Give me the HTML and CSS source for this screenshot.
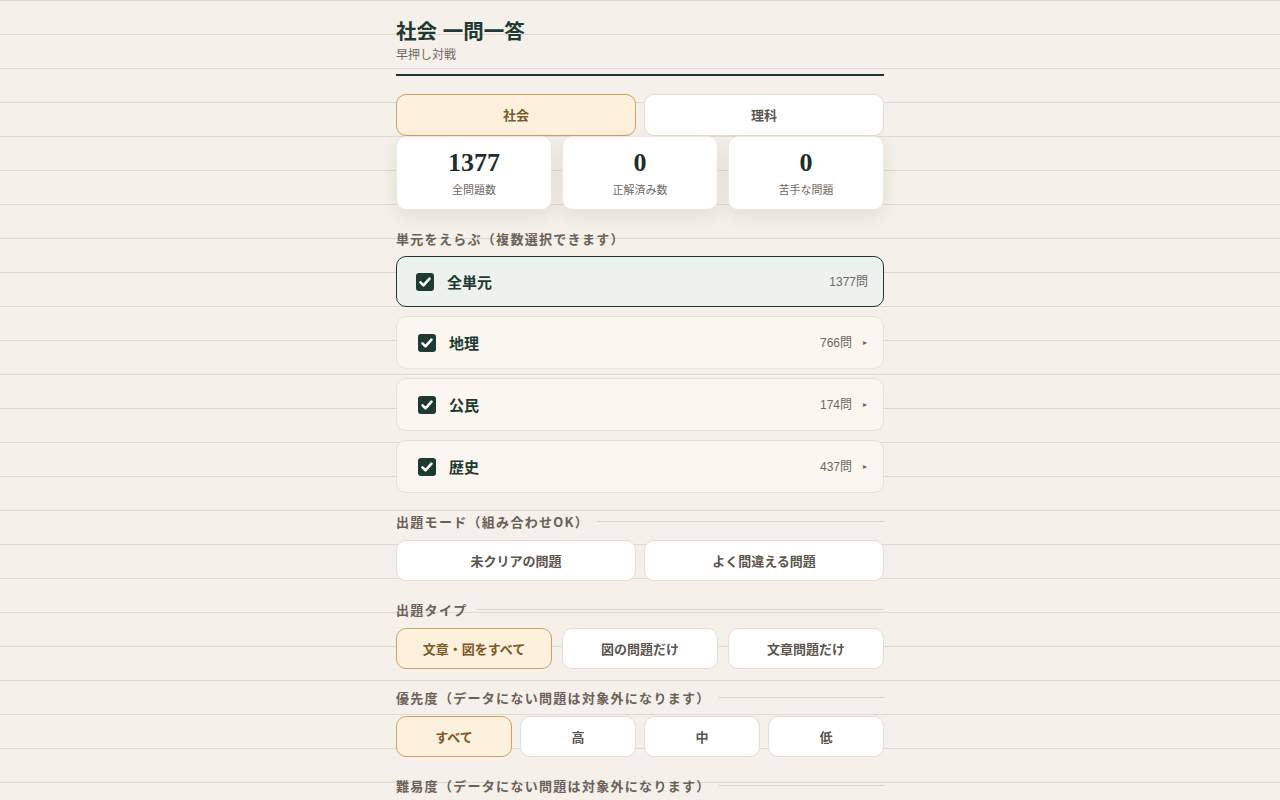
FILE: index.html
```html
<!DOCTYPE html>
<html lang="ja">
<head>
  <meta charset="UTF-8">
  <title>社会 一問一答</title>
  <link rel="stylesheet" href="styles.css">
</head>
<body>

  <div class="page">

    <header class="hero">
      <h1>社会 一問一答</h1>
      <p class="sub">早押し対戦</p>
    </header>

    <div class="tabs">
      <button class="btn active">社会</button>
      <button class="btn">理科</button>
    </div>

    <div class="stats">
      <div class="stat">
        <div class="num">1377</div>
        <div class="cap">全問題数</div>
      </div>
      <div class="stat">
        <div class="num">0</div>
        <div class="cap">正解済み数</div>
      </div>
      <div class="stat">
        <div class="num">0</div>
        <div class="cap">苦手な問題</div>
      </div>
    </div>

    <div class="section">
      <div class="label">単元をえらぶ（複数選択できます）</div>
      <div class="units">
        <div class="unit all">
          <span class="box"><svg viewBox="0 0 18 18"><path d="M4.5 9.3l3 3 6-6.6" /></svg></span>
          <span class="name">全単元</span>
          <span class="count">1377問</span>
        </div>
        <div class="unit">
          <span class="box"><svg viewBox="0 0 18 18"><path d="M4.5 9.3l3 3 6-6.6" /></svg></span>
          <span class="name">地理</span>
          <span class="count">766問</span>
          <span class="arrow">▸</span>
        </div>
        <div class="unit">
          <span class="box"><svg viewBox="0 0 18 18"><path d="M4.5 9.3l3 3 6-6.6" /></svg></span>
          <span class="name">公民</span>
          <span class="count">174問</span>
          <span class="arrow">▸</span>
        </div>
        <div class="unit">
          <span class="box"><svg viewBox="0 0 18 18"><path d="M4.5 9.3l3 3 6-6.6" /></svg></span>
          <span class="name">歴史</span>
          <span class="count">437問</span>
          <span class="arrow">▸</span>
        </div>
      </div>
    </div>

    <div class="section">
      <div class="label line">出題モード（組み合わせOK）</div>
      <div class="opts two">
        <button class="btn">未クリアの問題</button>
        <button class="btn">よく間違える問題</button>
      </div>
    </div>

    <div class="section">
      <div class="label line">出題タイプ</div>
      <div class="opts three">
        <button class="btn active">文章・図をすべて</button>
        <button class="btn">図の問題だけ</button>
        <button class="btn">文章問題だけ</button>
      </div>
    </div>

    <div class="section">
      <div class="label line">優先度（データにない問題は対象外になります）</div>
      <div class="opts four">
        <button class="btn active">すべて</button>
        <button class="btn">高</button>
        <button class="btn">中</button>
        <button class="btn">低</button>
      </div>
    </div>

    <div class="section">
      <div class="label line">難易度（データにない問題は対象外になります）</div>
    </div>

  </div>

</body>
</html>
```

FILE: styles.css
```css
body {
  margin: 0;
  font-family: "Liberation Sans", "Noto Sans CJK JP", sans-serif;
  color: #1e3a32;
  background-color: #f5f0e9;
  background-image: repeating-linear-gradient(to bottom, #e2d8ce 0, #e2d8ce 1px, transparent 1px, transparent 34px);
}

.page {
  width: 488px;
  margin: 0 auto;
  padding-bottom: 40px;
}

.hero {
  padding: 19px 0 11px;
  border-bottom: 2px solid #1e3a32;
  margin-bottom: 18px;
}

.hero h1 {
  margin: 0;
  font-size: 20.5px;
  line-height: 26px;
  font-weight: bold;
  color: #1e3a32;
}

.hero .sub {
  margin: 2px 0 0;
  font-size: 12px;
  line-height: 16px;
  color: #6f6860;
}

.btn {
  font-family: inherit;
  font-size: 13px;
  font-weight: bold;
  color: #5c554d;
  background: #ffffff;
  border: 1px solid #e6ddd2;
  border-radius: 10px;
  height: 41px;
  padding: 0;
  cursor: pointer;
}

.btn.active {
  background: #fdf0dc;
  border-color: #c9a264;
  color: #7a5a26;
}

.tabs {
  display: grid;
  grid-template-columns: 1fr 1fr;
  gap: 8px;
}

.tabs .btn {
  height: 42px;
  padding-bottom: 2px;
}

.stats {
  display: grid;
  grid-template-columns: repeat(3, 1fr);
  gap: 10px;
}

.stat {
  background: #ffffff;
  border: 1px solid #eee7de;
  border-radius: 10px;
  height: 74px;
  box-sizing: border-box;
  box-shadow: 0 6px 18px rgba(60, 45, 25, 0.09);
  text-align: center;
  padding-top: 11px;
}

.stat .num {
  font-family: "Liberation Serif", serif;
  font-size: 26px;
  font-weight: bold;
  line-height: 30px;
  color: #1c2f2a;
}

.stat .cap {
  font-size: 11px;
  line-height: 16px;
  margin-top: 4px;
  color: #6f6860;
}

.section {
  margin-top: 19px;
}

.label {
  display: flex;
  align-items: center;
  height: 18px;
  font-family: "Noto Sans CJK JP", sans-serif;
  font-size: 13px;
  font-weight: bold;
  letter-spacing: 1.3px;
  color: #6b6158;
  margin-bottom: 10px;
}

.label.line {
  gap: 8px;
}

.label.line::after {
  content: "";
  flex: 1;
  height: 1px;
  background: #ddd3c8;
}

.units {
  display: flex;
  flex-direction: column;
  gap: 9px;
  margin-top: -1px;
}

.unit {
  display: flex;
  align-items: center;
  height: 53px;
  box-sizing: border-box;
  padding: 0 16px 0 21px;
  background: #fbf6ef;
  border: 1px solid #eadfd3;
  border-radius: 10px;
}

.unit.all {
  height: 51px;
  padding: 0 15px 0 19px;
  background: #edf2ef;
  border-color: #1e3a32;
}

.box {
  width: 18px;
  height: 18px;
  border-radius: 3px;
  background: #1e3a32;
  display: flex;
}

.box svg {
  width: 18px;
  height: 18px;
  fill: none;
  stroke: #ffffff;
  stroke-width: 2.6;
  stroke-linecap: round;
  stroke-linejoin: round;
}

.name {
  margin-left: 13px;
  font-family: "Noto Sans CJK JP", sans-serif;
  font-size: 15px;
  line-height: 20px;
  font-weight: bold;
  color: #1e3a32;
  flex: 1;
}

.count {
  font-size: 12px;
  line-height: 16px;
  color: #6f6860;
}

.arrow {
  font-size: 8px;
  line-height: 16px;
  color: #6f6860;
  margin-left: 11px;
}

.opts {
  display: grid;
  gap: 8px;
}

.opts .btn {
  height: 41px;
}

.opts.two {
  grid-template-columns: 1fr 1fr;
}

.opts.three {
  grid-template-columns: repeat(3, 1fr);
  gap: 10px;
}

.opts.four {
  grid-template-columns: repeat(4, 1fr);
}
```
